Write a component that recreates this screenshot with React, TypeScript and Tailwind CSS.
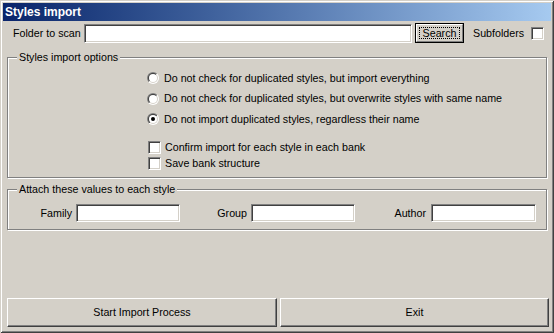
import React from "react";

const sunken =
  "bg-white border border-t-[#808080] border-l-[#808080] border-b-white border-r-white shadow-[inset_1px_1px_0_#404040,inset_-1px_-1px_0_#d4d0c8]";

const raised =
  "bg-[#d4d0c8] border border-t-white border-l-white border-b-[#404040] border-r-[#404040] shadow-[inset_-1px_-1px_0_#808080,inset_1px_1px_0_#d4d0c8]";

function Radio({ checked, id }: { checked?: boolean; id: string }) {
  return (
    <svg width="12" height="12" viewBox="0 0 12 12" className="shrink-0">
      <defs>
        <linearGradient id={`o${id}`} x1="0" y1="0" x2="1" y2="1">
          <stop offset="0.5" stopColor="#808080" />
          <stop offset="0.5" stopColor="#ffffff" />
        </linearGradient>
        <linearGradient id={`i${id}`} x1="0" y1="0" x2="1" y2="1">
          <stop offset="0.5" stopColor="#404040" />
          <stop offset="0.5" stopColor="#d4d0c8" />
        </linearGradient>
      </defs>
      <circle cx="6" cy="6" r="6" fill={`url(#o${id})`} />
      <circle cx="6" cy="6" r="5" fill={`url(#i${id})`} />
      <circle cx="6" cy="6" r="4" fill="#ffffff" />
      {checked && <circle cx="6" cy="6" r="2" fill="#000000" />}
    </svg>
  );
}

function Check() {
  return <div className={`w-[13px] h-[13px] shrink-0 ${sunken}`} />;
}

function Group({
  title,
  className,
  children,
}: {
  title: string;
  className: string;
  children?: React.ReactNode;
}) {
  return (
    <div
      className={`relative border border-[#808080] shadow-[inset_1px_1px_0_#fff,1px_1px_0_#fff] ${className}`}
    >
      <span className="absolute left-[9px] -top-[7px] leading-[13px] px-[2px] bg-[#d4d0c8]">
        {title}
      </span>
      {children}
    </div>
  );
}

export default function App() {
  return (
    <div
      className="w-[554px] h-[333px] bg-[#d4d0c8] p-[3px] flex flex-col text-[10.7px] text-black leading-[13px] shadow-[inset_1px_1px_0_#d4d0c8,inset_-1px_-1px_0_#404040,inset_2px_2px_0_#fff,inset_-2px_-2px_0_#808080]"
      style={{ fontFamily: '"Liberation Sans", Arial, sans-serif' }}
    >
      <div className="h-[18px] shrink-0 flex items-center pl-[2px] bg-gradient-to-r from-[#0a246a] to-[#a6caf0] text-white font-bold text-[12px]">
        Styles import
      </div>

      <div className="h-[20px] mt-[2px] flex items-center pl-[10px] shrink-0">
        <span className="w-[71px]">Folder to scan</span>
        <div className={`w-[328px] h-[19px] ${sunken}`} />
        <div className="ml-[3px] w-[49px] h-[20px] border border-black bg-[#d4d0c8] flex">
          <div className="flex-1 border border-t-white border-l-white border-b-[#808080] border-r-[#808080] p-[2px] flex">
            <div className="flex-1 border border-dotted border-black flex items-center justify-center">
              Search
            </div>
          </div>
        </div>
        <span className="ml-[9px]">Subfolders</span>
        <div className="ml-auto mr-[7px]">
          <Check />
        </div>
      </div>

      <Group title="Styles import options" className="mt-[14px] ml-[4px] mr-[4px] h-[121px] pt-[10px] shrink-0">
        <div className="flex flex-col">
          <div className="h-[20px] flex items-center pl-[139px]">
            <Radio id="a" />
            <span className="ml-[5px]">Do not check for duplicated styles, but import everything</span>
          </div>
          <div className="h-[21px] flex items-center pl-[139px]">
            <Radio id="b" />
            <span className="ml-[5px]">Do not check for duplicated styles, but overwrite styles with same name</span>
          </div>
          <div className="h-[20px] flex items-center pl-[139px]">
            <Radio id="c" checked />
            <span className="ml-[5px]">Do not import duplicated styles, regardless their name</span>
          </div>
          <div className="h-[16px] mt-[10px] flex items-center pl-[140px]">
            <Check />
            <span className="ml-[4px]">Confirm import for each style in each bank</span>
          </div>
          <div className="h-[16px] flex items-center pl-[140px]">
            <Check />
            <span className="ml-[4px]">Save bank structure</span>
          </div>
        </div>
      </Group>

      <Group title="Attach these values to each style" className="mt-[11px] ml-[4px] mr-[4px] h-[41px] pt-[14px] shrink-0">
        <div className="flex items-center">
          <span className="w-[64px] text-right">Family</span>
          <div className={`ml-[4px] w-[104px] h-[18px] ${sunken}`} />
          <span className="w-[67px] text-right">Group</span>
          <div className={`ml-[4px] w-[104px] h-[18px] ${sunken}`} />
          <span className="w-[71px] text-right">Author</span>
          <div className={`ml-[5px] w-[105px] h-[18px] ${sunken}`} />
        </div>
      </Group>

      <div className="mt-auto mb-[3px] ml-[4px] flex gap-[3px] shrink-0">
        <button className={`w-[270px] h-[29px] ${raised} flex items-center justify-center`}>
          Start Import Process
        </button>
        <button className={`w-[269px] h-[29px] ${raised} flex items-center justify-center`}>
          Exit
        </button>
      </div>
    </div>
  );
}
